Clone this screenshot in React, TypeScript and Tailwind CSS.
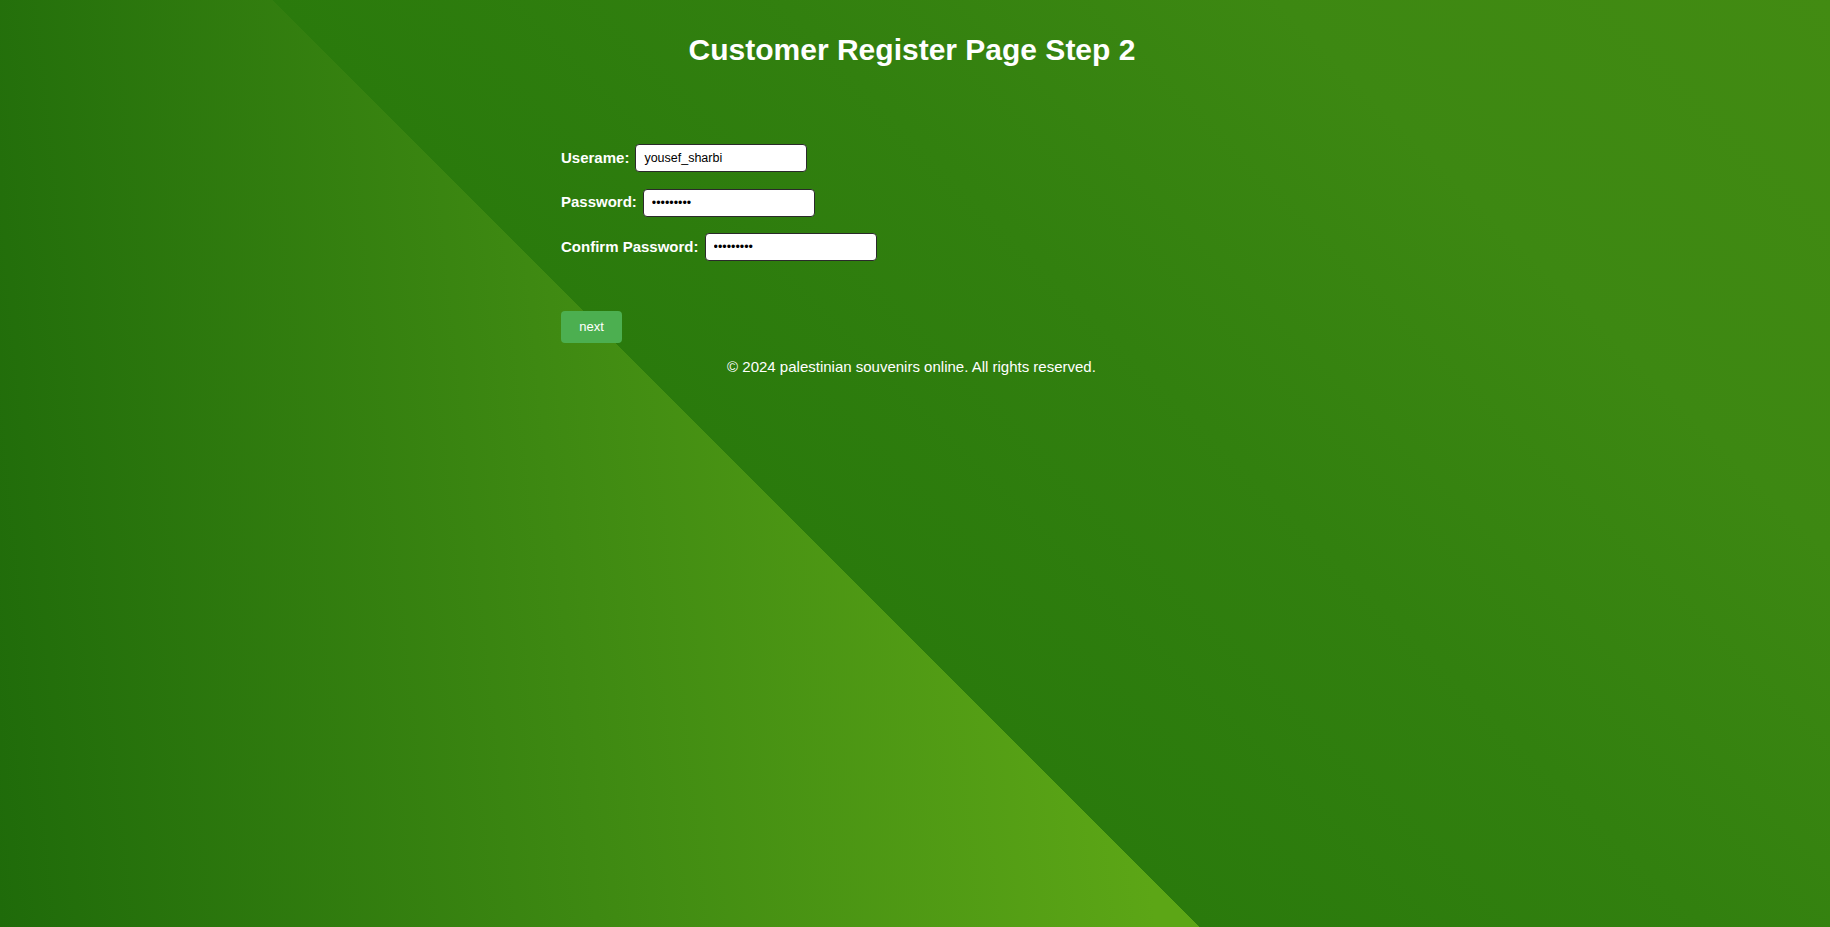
import { useState } from 'react';

const Field = ({ label, type, value, onChange }: { label: string; type: string; value: string; onChange: (v: string) => void }) => {
    return (
        <div className="flex items-center gap-[6px] h-[28px]">
            <label className="text-[15px] font-bold text-white">{label}</label>
            <input
                type={type}
                value={value}
                onChange={(e) => onChange(e.target.value)}
                className="w-[172px] h-[28px] bg-white border border-[#2a2a2a] rounded-[4px] pl-2 text-[12.5px] text-black outline-none"
            />
        </div>
    );
};

const App = () => {
    const [form, setForm] = useState({
        username: 'yousef_sharbi',
        password: '123456789',
        confirm: '123456789',
    });

    return (
        <div className="min-h-screen w-full font-['Liberation_Sans',Arial,sans-serif] text-white bg-[linear-gradient(45deg,transparent_43.5%,#2a7a0c_43.5%,#32800f_62%,#3d8812_80%,#428b12_100%),linear-gradient(84deg,#1f6b0a_0%,#3e8912_31%,#5ca616_60%)]">
            <h1 className="pt-[33px] pr-[6px] text-center text-[30px] leading-[34px] font-bold">Customer Register Page Step 2</h1>

            <div className="w-[708px] mx-auto mt-[77px]">
                <form className="flex flex-col gap-[16.5px]" onSubmit={(e) => e.preventDefault()}>
                    <Field label="Userame:" type="text" value={form.username} onChange={(v) => setForm({ ...form, username: v })} />
                    <Field label="Password:" type="password" value={form.password} onChange={(v) => setForm({ ...form, password: v })} />
                    <Field label="Confirm Password:" type="password" value={form.confirm} onChange={(v) => setForm({ ...form, confirm: v })} />
                    <div className="mt-[33px]">
                        <button type="submit" className="w-[61px] h-[32px] bg-[#4caf50] rounded-[4px] text-white text-[13px]">next</button>
                    </div>
                </form>
            </div>
            <p className="mt-[15px] pr-[7px] text-center text-[15px] leading-[17px]">© 2024 palestinian souvenirs online. All rights reserved.</p>
        </div>
    );
};

export default App;
